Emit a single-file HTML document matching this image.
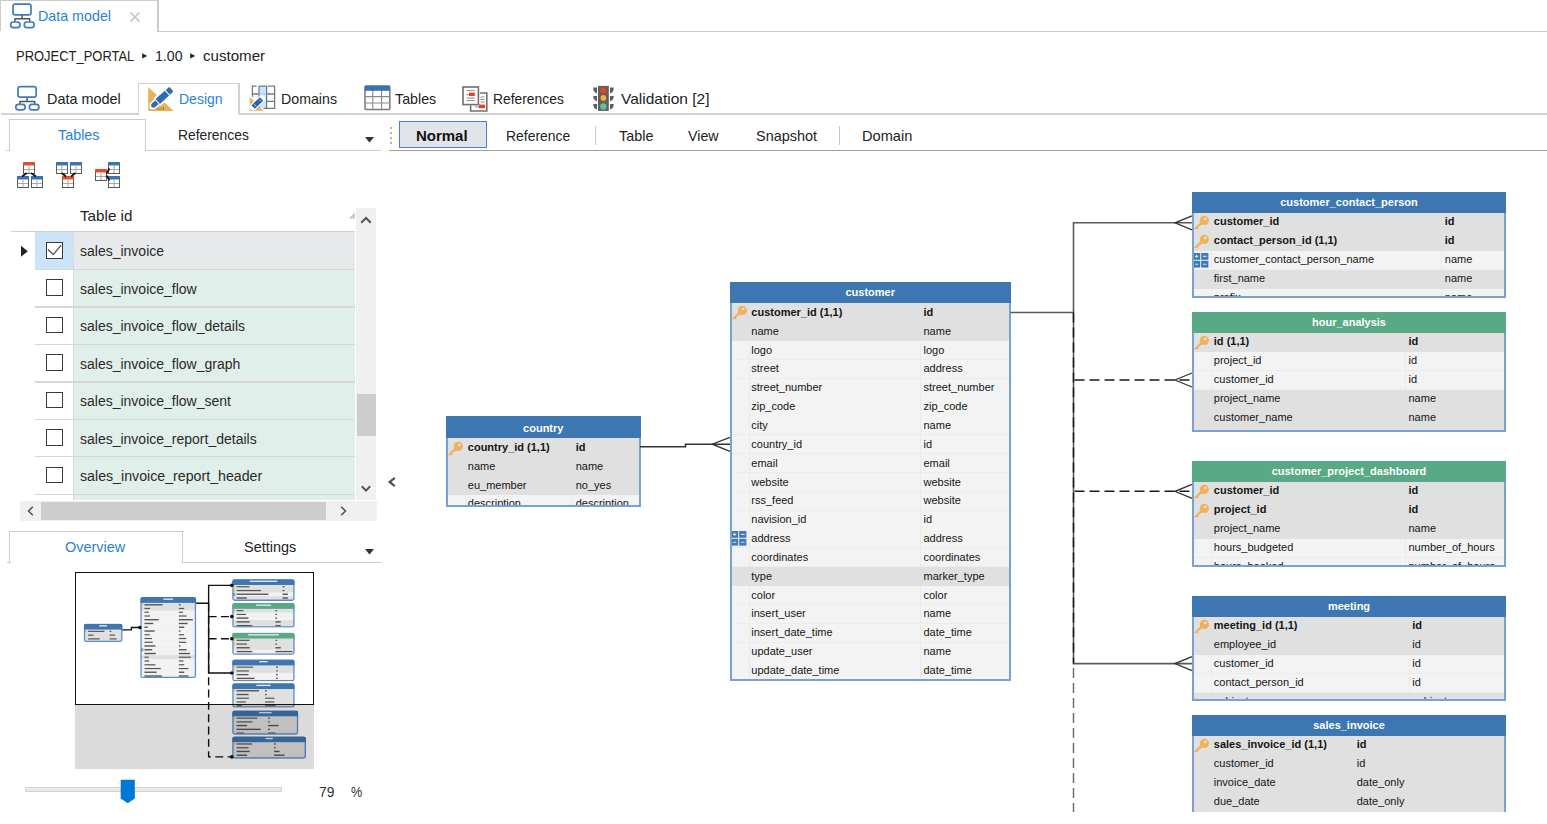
<!DOCTYPE html>
<html><head><meta charset="utf-8">
<style>
*{box-sizing:border-box}
html,body{margin:0;padding:0}
body{width:1547px;height:824px;position:relative;overflow:hidden;background:#fff;font-family:'Liberation Sans', sans-serif;color:#1e1e1e}
.a{position:absolute}
.t{position:absolute;white-space:nowrap;line-height:1;transform-origin:0 0}
</style></head><body>

<div class="a" style="left:0px;top:0px;width:158px;height:1px;background:#cccccc;"></div>
<div class="a" style="left:0px;top:0px;width:1px;height:31px;background:#cccccc;"></div>
<div class="a" style="left:157px;top:0px;width:2px;height:32px;background:#cccccc;"></div>
<div class="a" style="left:157px;top:31px;width:1390px;height:1px;background:#c8c8c8;"></div>
<svg class="a" style="left:0px;top:0px;" width="36" height="32" viewBox="0 0 36 32"><rect x="13" y="4.1" width="18" height="10.8" rx="2.2" fill="none" stroke="#3f7bc0" stroke-width="1.7"/>
<path d="M22.1 14.9V18.8M14.9 18.8H29.7M14.9 18.3V21.8M29.7 18.3V21.8" stroke="#555" stroke-width="1.5" fill="none"/>
<rect x="10.7" y="22" width="9.3" height="5.7" rx="2.6" fill="none" stroke="#3f7bc0" stroke-width="1.7"/>
<rect x="24.3" y="22" width="9.8" height="5.7" rx="2.6" fill="none" stroke="#3f7bc0" stroke-width="1.7"/></svg>
<div class="t" style="left:38.00px;top:8.10px;font-size:15px;color:#2a82d6;font-weight:400;transform:scaleX(0.9516);">Data model</div>
<svg class="a" style="left:129px;top:12px;" width="12" height="10" viewBox="0 0 12 10"><path d="M1.5 0.5L10.5 9.5M10.5 0.5L1.5 9.5" stroke="#c4c4c4" stroke-width="1.6"/></svg>
<div class="t" style="left:15.50px;top:47.80px;font-size:15px;color:#222;font-weight:400;transform:scaleX(0.8636);">PROJECT_PORTAL</div>
<svg class="a" style="left:141px;top:52px;" width="8" height="8" viewBox="0 0 8 8"><path d="M1.2 1.2L6.2 3.9L1.2 6.6Z" fill="#222"/></svg>
<div class="t" style="left:154.50px;top:47.80px;font-size:15px;color:#222;font-weight:400;transform:scaleX(0.9421);">1.00</div>
<svg class="a" style="left:188.5px;top:52px;" width="8" height="8" viewBox="0 0 8 8"><path d="M1.2 1.2L6.2 3.9L1.2 6.6Z" fill="#222"/></svg>
<div class="t" style="left:202.60px;top:47.80px;font-size:15px;color:#222;font-weight:400;transform:scaleX(1.0068);">customer</div>
<div class="a" style="left:1px;top:113.2px;width:137px;height:1.5px;background:#d2d2d2;"></div>
<div class="a" style="left:239px;top:113.2px;width:1308px;height:1.5px;background:#d2d2d2;"></div>
<div class="a" style="left:137.5px;top:82.5px;width:102px;height:1.5px;background:#d2d2d2;"></div>
<div class="a" style="left:137.5px;top:82.5px;width:1.5px;height:32px;background:#d2d2d2;"></div>
<div class="a" style="left:238.3px;top:82.5px;width:1.5px;height:32px;background:#d2d2d2;"></div>
<svg class="a" style="left:10px;top:82px;" width="32" height="32" viewBox="0 0 32 32"><rect x="8.0" y="4.7" width="18.2" height="10.4" rx="2.2" fill="none" stroke="#3f7bc0" stroke-width="1.7"/>
<path d="M17.1 15.9V19.6M9.9 19.6H24.7M9.9 19.1V22.4M24.7 19.1V22.4" stroke="#555" stroke-width="1.5" fill="none"/>
<rect x="5.8" y="22.4" width="9.3" height="5.5" rx="2.6" fill="none" stroke="#3f7bc0" stroke-width="1.7"/>
<rect x="19.4" y="22.4" width="9.5" height="5.5" rx="2.6" fill="none" stroke="#3f7bc0" stroke-width="1.7"/></svg>
<div class="t" style="left:46.50px;top:90.90px;font-size:15px;color:#222;font-weight:400;transform:scaleX(0.9608);">Data model</div>
<svg class="a" style="left:147px;top:86px;" width="28" height="26" viewBox="0 0 28 26"><path d="M1.2 1L1.2 24.9L26.6 24.9Z" fill="#e8b25c"/>
<path d="M10.2 23.6v-1.4M12.2 23.6v-1.2M14.2 23.6v-1.8M16.4 23.6v-2.6" stroke="#7d6a48" stroke-width="0.9"/>
<g transform="translate(3.9,21.6) rotate(-42)">
<path d="M0 0L2.5 -2.6H8.2V2.6H2.5Z M9.2 -3.9H21.6V3.9H9.2Z M22.6 -3.6H27.6V3.6H22.6Z" fill="#fff" stroke="#fff" stroke-width="2.6" stroke-linejoin="round"/>
<path d="M0.6 0L2.6 -2.4H8.2V2.4H2.6Z" fill="#2b6cb3"/>
<rect x="9.2" y="-3.3" width="12.4" height="6.6" fill="#2b6cb3"/>
<rect x="22.6" y="-3.1" width="5" height="6.2" rx="0.6" fill="#2b6cb3"/>
</g></svg>
<div class="t" style="left:179.40px;top:90.90px;font-size:15px;color:#2a82d6;font-weight:400;transform:scaleX(0.9337);">Design</div>
<svg class="a" style="left:248px;top:85px;" width="28" height="27" viewBox="0 0 28 27"><rect x="11.2" y="1.6" width="7.2" height="21.4" fill="#cde5f7"/>
<path d="M4.4 11.8V1.1H8.6M19.6 1.1H26.6V23.4H15.6M5 9H10.8M18.7 9H26.6M18.7 16.4H26.6" fill="none" stroke="#7a7a7a" stroke-width="1.3"/>
<path d="M11 1.1V23.4M18.6 1.1V23.4M11 1.1H18.6" fill="none" stroke="#5b7896" stroke-width="1.2"/>
<path d="M11 9H18.6" stroke="#a8c4dc" stroke-width="1"/>
<path d="M1.7 12.1V25.7H15.3Z" fill="#e8b25c"/>
<path d="M5.2 21.9L13.6 14" stroke="#fff" stroke-width="7" stroke-linecap="round"/>
<path d="M5.2 21.9L13.6 14" stroke="#2563b0" stroke-width="4.8" stroke-linecap="butt"/>
<path d="M6.2 19.2L8 21M11.3 14.6L13 16.4" stroke="#cfe0f2" stroke-width="0.9"/></svg>
<div class="t" style="left:281.00px;top:90.90px;font-size:15px;color:#222;font-weight:400;transform:scaleX(0.9461);">Domains</div>
<svg class="a" style="left:364px;top:85px;" width="27" height="26" viewBox="0 0 27 26"><rect x="1" y="1" width="24.8" height="23.6" rx="1" fill="#fff" stroke="#787878" stroke-width="1.5"/>
<rect x="0.8" y="0.8" width="25.2" height="5" fill="#3a73b4"/>
<path d="M8.8 5.8V24.5M17.6 5.8V24.5M1 11.6H25.8M1 18H25.8" stroke="#8a8a8a" stroke-width="1.1"/>
<path d="M8.8 1V5.8M17.6 1V5.8" stroke="#2f5f98" stroke-width="0.9"/></svg>
<div class="t" style="left:394.80px;top:90.90px;font-size:15px;color:#222;font-weight:400;transform:scaleX(0.9501);">Tables</div>
<svg class="a" style="left:461px;top:85px;" width="28" height="27" viewBox="0 0 28 27"><rect x="2" y="2" width="15.4" height="17.6" fill="#fff" stroke="#707070" stroke-width="1.6"/>
<path d="M5.5 5.6H13.8M5.5 13H13.8M5.5 15.6H13.8" stroke="#8c8c8c" stroke-width="1"/>
<path d="M5.5 9.6H7.6" stroke="#8c8c8c" stroke-width="1.3"/>
<rect x="8" y="7.6" width="5.8" height="3.4" fill="#d9442a"/>
<path d="M9.6 20.4V26H25.8V8H18.8" fill="none" stroke="#707070" stroke-width="1.6"/>
<path d="M19.6 12H23.6M19.6 14.5H23.6M19.6 17H23.6M14 21.9H18" stroke="#8c8c8c" stroke-width="1"/>
<rect x="18" y="19.6" width="6" height="3.6" fill="#d9442a"/></svg>
<div class="t" style="left:492.70px;top:90.90px;font-size:15px;color:#222;font-weight:400;transform:scaleX(0.9230);">References</div>
<svg class="a" style="left:592px;top:85px;" width="23" height="27" viewBox="0 0 23 27"><path d="M1.2 2.4Q1.2 7.5 5 8.4V2.4Z M1.2 11Q1.2 15.5 5 16.2V11Z M1.2 18.9Q1.2 23.5 5 24.4V18.9Z" fill="#606060"/>
<path d="M21.8 2.4Q21.8 7.5 18 8.4V2.4Z M21.8 11Q21.8 15.5 18 16.2V11Z M21.8 18.9Q21.8 23.5 18 24.4V18.9Z" fill="#606060"/>
<rect x="6" y="0.9" width="10.8" height="25" fill="#5f5f5f"/>
<circle cx="11.4" cy="5.4" r="3.2" fill="#e04427"/>
<circle cx="11.4" cy="12.9" r="2.8" fill="#f7b32d"/>
<circle cx="11.4" cy="21.5" r="3.2" fill="#5ec495"/></svg>
<div class="t" style="left:621.00px;top:90.90px;font-size:15px;color:#222;font-weight:400;transform:scaleX(1.0336);">Validation [2]</div>
<div class="a" style="left:9px;top:119px;width:137px;height:1.2px;background:#cccccc;"></div>
<div class="a" style="left:9px;top:119px;width:1.2px;height:31.5px;background:#cccccc;"></div>
<div class="a" style="left:144.8px;top:119px;width:1.2px;height:31.5px;background:#cccccc;"></div>
<div class="a" style="left:6px;top:149.6px;width:4px;height:1.2px;background:#cccccc;"></div>
<div class="a" style="left:145px;top:149.6px;width:236px;height:1.2px;background:#cccccc;"></div>
<div class="t" style="left:57.50px;top:127.00px;font-size:15px;color:#2a82d6;font-weight:400;transform:scaleX(0.9570);">Tables</div>
<div class="t" style="left:177.80px;top:127.00px;font-size:15px;color:#222;font-weight:400;transform:scaleX(0.9230);">References</div>
<svg class="a" style="left:365px;top:137px;" width="9" height="6" viewBox="0 0 9 6"><path d="M0 0H9L4.5 5.5Z" fill="#333"/></svg>
<div class="a" style="left:390px;top:126.8px;width:2.2px;height:2.2px;background:#b4b4a8;"></div>
<div class="a" style="left:390px;top:131.9px;width:2.2px;height:2.2px;background:#b4b4a8;"></div>
<div class="a" style="left:390px;top:136.9px;width:2.2px;height:2.2px;background:#b4b4a8;"></div>
<div class="a" style="left:390px;top:142px;width:2.2px;height:2.2px;background:#b4b4a8;"></div>
<div class="a" style="left:389px;top:149.5px;width:1158px;height:1.5px;background:#a2a28c;"></div>
<div class="a" style="left:398.8px;top:120.8px;width:88.2px;height:27.4px;background:#e1e5ea;border:1.6px solid #4a7fd0"></div>
<div class="t" style="left:415.90px;top:127.90px;font-size:15px;color:#111;font-weight:700;">Normal</div>
<div class="t" style="left:505.50px;top:127.90px;font-size:15px;color:#222;font-weight:400;transform:scaleX(0.9276);">Reference</div>
<div class="a" style="left:595px;top:126px;width:1px;height:18.6px;background:#c9c9c9;"></div>
<div class="t" style="left:619.20px;top:127.90px;font-size:15px;color:#222;font-weight:400;transform:scaleX(0.9592);">Table</div>
<div class="t" style="left:688.20px;top:127.90px;font-size:15px;color:#222;font-weight:400;transform:scaleX(0.9480);">View</div>
<div class="t" style="left:756.00px;top:127.90px;font-size:15px;color:#222;font-weight:400;transform:scaleX(0.9623);">Snapshot</div>
<div class="a" style="left:839px;top:126px;width:1px;height:18.6px;background:#c9c9c9;"></div>
<div class="t" style="left:862.40px;top:127.90px;font-size:15px;color:#222;font-weight:400;transform:scaleX(0.9731);">Domain</div>
<svg class="a" style="left:16px;top:161px;" width="28" height="28" viewBox="0 0 28 28"><g transform="translate(7,1)"><rect x="0.5" y="0.5" width="11" height="11" fill="#fff" stroke="#5a5a5a" stroke-width="1"/>
<rect x="0" y="0" width="12" height="3.5" fill="#d9512f"/>
<path d="M6 3.5V11M1 7.5H11" stroke="#a8a8a8" stroke-width="1"/></g><g transform="translate(1,15)"><rect x="0.5" y="0.5" width="11" height="11" fill="#fff" stroke="#5a5a5a" stroke-width="1"/>
<rect x="0" y="0" width="12" height="3.5" fill="#3a72b6"/>
<path d="M6 3.5V11M1 7.5H11" stroke="#a8a8a8" stroke-width="1"/></g><g transform="translate(15,15)"><rect x="0.5" y="0.5" width="11" height="11" fill="#fff" stroke="#5a5a5a" stroke-width="1"/>
<rect x="0" y="0" width="12" height="3.5" fill="#3a72b6"/>
<path d="M6 3.5V11M1 7.5H11" stroke="#a8a8a8" stroke-width="1"/></g><path d="M11 12L6 15.5M15 12L20 15.5" stroke="#111" stroke-width="1.6"/></svg>
<svg class="a" style="left:55px;top:161px;" width="28" height="28" viewBox="0 0 28 28"><g transform="translate(1,1)"><rect x="0.5" y="0.5" width="11" height="11" fill="#fff" stroke="#5a5a5a" stroke-width="1"/>
<rect x="0" y="0" width="12" height="3.5" fill="#3a72b6"/>
<path d="M6 3.5V11M1 7.5H11" stroke="#a8a8a8" stroke-width="1"/></g><g transform="translate(15,1)"><rect x="0.5" y="0.5" width="11" height="11" fill="#fff" stroke="#5a5a5a" stroke-width="1"/>
<rect x="0" y="0" width="12" height="3.5" fill="#3a72b6"/>
<path d="M6 3.5V11M1 7.5H11" stroke="#a8a8a8" stroke-width="1"/></g><g transform="translate(7,15)"><rect x="0.5" y="0.5" width="11" height="11" fill="#fff" stroke="#5a5a5a" stroke-width="1"/>
<rect x="0" y="0" width="12" height="3.5" fill="#d9512f"/>
<path d="M6 3.5V11M1 7.5H11" stroke="#a8a8a8" stroke-width="1"/></g><path d="M6.5 12L11 15.5M20.5 12L16 15.5" stroke="#111" stroke-width="1.6"/></svg>
<svg class="a" style="left:94px;top:161px;" width="28" height="28" viewBox="0 0 28 28"><g transform="translate(1,8)"><rect x="0.5" y="0.5" width="11" height="11" fill="#fff" stroke="#5a5a5a" stroke-width="1"/>
<rect x="0" y="0" width="12" height="3.5" fill="#d9512f"/>
<path d="M6 3.5V11M1 7.5H11" stroke="#a8a8a8" stroke-width="1"/></g><g transform="translate(14,1)"><rect x="0.5" y="0.5" width="11" height="11" fill="#fff" stroke="#5a5a5a" stroke-width="1"/>
<rect x="0" y="0" width="12" height="3.5" fill="#3a72b6"/>
<path d="M6 3.5V11M1 7.5H11" stroke="#a8a8a8" stroke-width="1"/></g><g transform="translate(14,15)"><rect x="0.5" y="0.5" width="11" height="11" fill="#fff" stroke="#5a5a5a" stroke-width="1"/>
<rect x="0" y="0" width="12" height="3.5" fill="#3a72b6"/>
<path d="M6 3.5V11M1 7.5H11" stroke="#a8a8a8" stroke-width="1"/></g><path d="M12.5 12.5L15.5 7.5M12.5 14.5L15.5 19.5" stroke="#111" stroke-width="1.6"/></svg>
<div class="t" style="left:79.60px;top:208.20px;font-size:15px;color:#222;font-weight:400;transform:scaleX(1.0134);">Table id</div>
<svg class="a" style="left:348px;top:212px;" width="8" height="7" viewBox="0 0 8 7"><path d="M7 0.5V6.5H0.5Z" fill="#c8c8c8"/></svg>
<div class="a" style="left:11px;top:231px;width:344px;height:1.2px;background:#d2d2d2;"></div>
<div class="a" style="left:0;top:232px;width:356px;height:267.5px;overflow:hidden">
<div class="a" style="left:35px;top:0.00px;width:39px;height:37.45px;background:#cce4f7"></div>
<div class="a" style="left:74px;top:0.00px;width:281px;height:37.45px;background:#e8e9eb"></div>
<div class="a" style="left:73px;top:0.00px;width:1.2px;height:37.45px;background:#d8d8d8"></div>
<div class="a" style="left:35px;top:37.45px;width:39px;height:37.45px;background:#fff"></div>
<div class="a" style="left:74px;top:37.45px;width:281px;height:37.45px;background:#e1efea"></div>
<div class="a" style="left:73px;top:37.45px;width:1.2px;height:37.45px;background:#d8d8d8"></div>
<div class="a" style="left:35px;top:74.90px;width:39px;height:37.45px;background:#fff"></div>
<div class="a" style="left:74px;top:74.90px;width:281px;height:37.45px;background:#e1efea"></div>
<div class="a" style="left:73px;top:74.90px;width:1.2px;height:37.45px;background:#d8d8d8"></div>
<div class="a" style="left:35px;top:112.35px;width:39px;height:37.45px;background:#fff"></div>
<div class="a" style="left:74px;top:112.35px;width:281px;height:37.45px;background:#e1efea"></div>
<div class="a" style="left:73px;top:112.35px;width:1.2px;height:37.45px;background:#d8d8d8"></div>
<div class="a" style="left:35px;top:149.80px;width:39px;height:37.45px;background:#fff"></div>
<div class="a" style="left:74px;top:149.80px;width:281px;height:37.45px;background:#e1efea"></div>
<div class="a" style="left:73px;top:149.80px;width:1.2px;height:37.45px;background:#d8d8d8"></div>
<div class="a" style="left:35px;top:187.25px;width:39px;height:37.45px;background:#fff"></div>
<div class="a" style="left:74px;top:187.25px;width:281px;height:37.45px;background:#e1efea"></div>
<div class="a" style="left:73px;top:187.25px;width:1.2px;height:37.45px;background:#d8d8d8"></div>
<div class="a" style="left:35px;top:224.70px;width:39px;height:37.45px;background:#fff"></div>
<div class="a" style="left:74px;top:224.70px;width:281px;height:37.45px;background:#e1efea"></div>
<div class="a" style="left:73px;top:224.70px;width:1.2px;height:37.45px;background:#d8d8d8"></div>
<div class="a" style="left:35px;top:262.15px;width:39px;height:37.45px;background:#fff"></div>
<div class="a" style="left:74px;top:262.15px;width:281px;height:37.45px;background:#e1efea"></div>
<div class="a" style="left:73px;top:262.15px;width:1.2px;height:37.45px;background:#d8d8d8"></div>
<div class="a" style="left:35px;top:36.85px;width:320px;height:1.4px;background:#d6d6d6"></div>
<div class="a" style="left:46px;top:10.00px;width:16.5px;height:16.5px;border:1.6px solid #3a3a3a;background:#fff"></div>
<svg class="a" style="left:46px;top:10.00px" width="17" height="17"><path d="M2 7.6L7.2 12.6L15 3.4" stroke="#555" stroke-width="1.4" fill="none"/></svg>
<div class="t" style="left:80.00px;top:12.35px;font-size:14px;color:#2a2a2a;font-weight:400;">sales_invoice</div>
<div class="a" style="left:35px;top:74.30px;width:320px;height:1.4px;background:#d6d6d6"></div>
<div class="a" style="left:46px;top:47.45px;width:16.5px;height:16.5px;border:1.6px solid #3a3a3a;background:#fff"></div>
<div class="t" style="left:80.00px;top:49.80px;font-size:14px;color:#2a2a2a;font-weight:400;">sales_invoice_flow</div>
<div class="a" style="left:35px;top:111.75px;width:320px;height:1.4px;background:#d6d6d6"></div>
<div class="a" style="left:46px;top:84.90px;width:16.5px;height:16.5px;border:1.6px solid #3a3a3a;background:#fff"></div>
<div class="t" style="left:80.00px;top:87.25px;font-size:14px;color:#2a2a2a;font-weight:400;">sales_invoice_flow_details</div>
<div class="a" style="left:35px;top:149.20px;width:320px;height:1.4px;background:#d6d6d6"></div>
<div class="a" style="left:46px;top:122.35px;width:16.5px;height:16.5px;border:1.6px solid #3a3a3a;background:#fff"></div>
<div class="t" style="left:80.00px;top:124.70px;font-size:14px;color:#2a2a2a;font-weight:400;">sales_invoice_flow_graph</div>
<div class="a" style="left:35px;top:186.65px;width:320px;height:1.4px;background:#d6d6d6"></div>
<div class="a" style="left:46px;top:159.80px;width:16.5px;height:16.5px;border:1.6px solid #3a3a3a;background:#fff"></div>
<div class="t" style="left:80.00px;top:162.15px;font-size:14px;color:#2a2a2a;font-weight:400;">sales_invoice_flow_sent</div>
<div class="a" style="left:35px;top:224.10px;width:320px;height:1.4px;background:#d6d6d6"></div>
<div class="a" style="left:46px;top:197.25px;width:16.5px;height:16.5px;border:1.6px solid #3a3a3a;background:#fff"></div>
<div class="t" style="left:80.00px;top:199.60px;font-size:14px;color:#2a2a2a;font-weight:400;">sales_invoice_report_details</div>
<div class="a" style="left:35px;top:261.55px;width:320px;height:1.4px;background:#d6d6d6"></div>
<div class="a" style="left:46px;top:234.70px;width:16.5px;height:16.5px;border:1.6px solid #3a3a3a;background:#fff"></div>
<div class="t" style="left:80.00px;top:237.05px;font-size:14px;color:#2a2a2a;font-weight:400;transform:scaleX(1.0134);">sales_invoice_report_header</div>
<div class="a" style="left:35px;top:299.00px;width:320px;height:1.4px;background:#d6d6d6"></div>
<div class="a" style="left:46px;top:272.15px;width:16.5px;height:16.5px;border:1.6px solid #3a3a3a;background:#fff"></div>
<div class="t" style="left:80.00px;top:274.50px;font-size:14px;color:#2a2a2a;font-weight:400;">sales_invoice_x</div>
</div>
<svg class="a" style="left:20px;top:245px;" width="9" height="13" viewBox="0 0 9 13"><path d="M1 0.8L7.8 6.3L1 11.8Z" fill="#222"/></svg>
<div class="a" style="left:356px;top:208px;width:20px;height:292px;background:#f0f0f0;"></div>
<svg class="a" style="left:359px;top:214px;" width="14" height="11" viewBox="0 0 14 11"><path d="M2.2 8.8L7 4L11.8 8.8" stroke="#555" stroke-width="2" fill="none"/></svg>
<svg class="a" style="left:359px;top:484px;" width="14" height="11" viewBox="0 0 14 11"><path d="M2.8 2.3L7 6.6L11.2 2.3" stroke="#555" stroke-width="2" fill="none"/></svg>
<div class="a" style="left:356.5px;top:393.7px;width:19px;height:42px;background:#cdcdcd;"></div>
<div class="a" style="left:19.5px;top:500.5px;width:357px;height:20.2px;background:#f0f0f0;"></div>
<div class="a" style="left:41px;top:501.5px;width:285px;height:18px;background:#cdcdcd;"></div>
<svg class="a" style="left:24px;top:505px;" width="12" height="12" viewBox="0 0 12 12"><path d="M8.8 1.8L4.5 6L8.8 10.2" stroke="#555" stroke-width="1.6" fill="none"/></svg>
<svg class="a" style="left:338px;top:505px;" width="12" height="12" viewBox="0 0 12 12"><path d="M3.2 1.8L7.5 6L3.2 10.2" stroke="#555" stroke-width="1.6" fill="none"/></svg>
<svg class="a" style="left:385px;top:476px;" width="12" height="12" viewBox="0 0 12 12"><path d="M9.8 1.8L4.6 6L9.8 10.2" stroke="#555" stroke-width="2.3" fill="none"/></svg>
<div class="a" style="left:9px;top:531px;width:174.5px;height:1.2px;background:#cccccc;"></div>
<div class="a" style="left:9px;top:531px;width:1.2px;height:32px;background:#cccccc;"></div>
<div class="a" style="left:182.2px;top:531px;width:1.2px;height:32px;background:#cccccc;"></div>
<div class="a" style="left:6.5px;top:562.2px;width:4px;height:1.2px;background:#cccccc;"></div>
<div class="a" style="left:182.5px;top:562.2px;width:198px;height:1.2px;background:#cccccc;"></div>
<div class="t" style="left:65.20px;top:539.30px;font-size:15px;color:#2a82d6;font-weight:400;transform:scaleX(0.9624);">Overview</div>
<div class="t" style="left:243.80px;top:539.30px;font-size:15px;color:#222;font-weight:400;transform:scaleX(0.9632);">Settings</div>
<svg class="a" style="left:364.5px;top:549px;" width="9" height="6" viewBox="0 0 9 6"><path d="M0 0H9L4.5 5.5Z" fill="#333"/></svg>
<div class="a" style="left:24.8px;top:787px;width:257.5px;height:5px;background:#e7eae7;border:1px solid #d4d4d4"></div>
<svg class="a" style="left:120px;top:779px;" width="16" height="25" viewBox="0 0 16 25"><path d="M0.7 0.8H14.8V19.5L7.75 24.3L0.7 19.5Z" fill="#0078d7"/></svg>
<div class="t" style="left:318.50px;top:785.45px;font-size:14px;color:#333;font-weight:400;transform:scaleX(0.9956);">79</div>
<div class="t" style="left:350.80px;top:785.45px;font-size:14px;color:#333;font-weight:400;transform:scaleX(0.8999);">%</div>
<div class="a" style="left:389px;top:151px;width:1158px;height:661px;overflow:hidden">
<div class="a" style="left:-389px;top:-151px;width:1600px;height:1100px">
<div class="a" style="left:446px;top:416px;width:194.5px;height:91.00px;overflow:hidden;background:#e0e0e0;">
<div class="a" style="left:0;top:22.40px;width:194.5px;height:19.15px;background:#e0e0e0"></div>
<div class="t" style="left:21.80px;top:25.89px;font-size:11px;color:#151515;font-weight:700;">country_id (1,1)</div>
<div class="t" style="left:129.70px;top:25.89px;font-size:11px;color:#151515;font-weight:700;">id</div>
<svg class="a" style="left:0px;top:22.60px" width="17" height="18" viewBox="0 0 17 18">
<circle cx="12.3" cy="7.4" r="4.6" fill="#ecb25e"/>
<path d="M9.2 8.4L2.4 15.2Q2.2 16.4 3.4 16.6L4.6 15.6L5.6 16.4L6.8 15.2L6 14.2L11.6 10.4Z" fill="#ecb25e"/>
<circle cx="13.3" cy="5.9" r="1.15" fill="#fff" opacity="0.75"/></svg>
<div class="a" style="left:0;top:41.25px;width:194.5px;height:19.15px;background:#e0e0e0"></div>
<div class="t" style="left:21.80px;top:44.74px;font-size:11px;color:#151515;font-weight:400;">name</div>
<div class="t" style="left:129.70px;top:44.74px;font-size:11px;color:#151515;font-weight:400;">name</div>
<div class="a" style="left:0;top:60.10px;width:194.5px;height:19.15px;background:#e0e0e0"></div>
<div class="t" style="left:21.80px;top:63.59px;font-size:11px;color:#151515;font-weight:400;">eu_member</div>
<div class="t" style="left:129.70px;top:63.59px;font-size:11px;color:#151515;font-weight:400;">no_yes</div>
<div class="a" style="left:0;top:78.95px;width:194.5px;height:19.15px;background:#f3f3f3"></div>
<div class="a" style="left:0;top:97.00px;width:194.5px;height:0.8px;background:#ececec"></div>
<div class="a" style="left:19px;top:78.95px;width:1px;height:18.85px;background:#eaeaea"></div>
<div class="a" style="left:126.2px;top:78.95px;width:1px;height:18.85px;background:#eaeaea"></div>
<div class="t" style="left:21.80px;top:82.44px;font-size:11px;color:#151515;font-weight:400;">description</div>
<div class="t" style="left:129.70px;top:82.44px;font-size:11px;color:#151515;font-weight:400;">description</div>
<div class="a" style="left:0;top:0;width:194.5px;height:91.00px;border:2px solid #7aa1cf;"></div>
<div class="a" style="left:0;top:0;width:194.5px;height:22.4px;background:#3d76b1"></div>
<div class="t" style="left:77.08px;top:6.89px;font-size:11px;color:#fff;font-weight:700;">country</div>
</div>
<div class="a" style="left:729.5px;top:282px;width:281.5px;height:399.00px;overflow:hidden;background:#e0e0e0;">
<div class="a" style="left:0;top:21.20px;width:281.5px;height:19.15px;background:#e0e0e0"></div>
<div class="t" style="left:21.80px;top:24.89px;font-size:11px;color:#151515;font-weight:700;">customer_id (1,1)</div>
<div class="t" style="left:194.00px;top:24.89px;font-size:11px;color:#151515;font-weight:700;">id</div>
<svg class="a" style="left:0px;top:21.40px" width="17" height="18" viewBox="0 0 17 18">
<circle cx="12.3" cy="7.4" r="4.6" fill="#ecb25e"/>
<path d="M9.2 8.4L2.4 15.2Q2.2 16.4 3.4 16.6L4.6 15.6L5.6 16.4L6.8 15.2L6 14.2L11.6 10.4Z" fill="#ecb25e"/>
<circle cx="13.3" cy="5.9" r="1.15" fill="#fff" opacity="0.75"/></svg>
<div class="a" style="left:0;top:40.05px;width:281.5px;height:19.15px;background:#e0e0e0"></div>
<div class="t" style="left:21.80px;top:43.74px;font-size:11px;color:#151515;font-weight:400;">name</div>
<div class="t" style="left:194.00px;top:43.74px;font-size:11px;color:#151515;font-weight:400;">name</div>
<div class="a" style="left:0;top:58.90px;width:281.5px;height:19.15px;background:#f3f3f3"></div>
<div class="a" style="left:0;top:76.95px;width:281.5px;height:0.8px;background:#ececec"></div>
<div class="a" style="left:19px;top:58.90px;width:1px;height:18.85px;background:#eaeaea"></div>
<div class="a" style="left:190.5px;top:58.90px;width:1px;height:18.85px;background:#eaeaea"></div>
<div class="t" style="left:21.80px;top:62.59px;font-size:11px;color:#151515;font-weight:400;">logo</div>
<div class="t" style="left:194.00px;top:62.59px;font-size:11px;color:#151515;font-weight:400;">logo</div>
<div class="a" style="left:0;top:77.75px;width:281.5px;height:19.15px;background:#f3f3f3"></div>
<div class="a" style="left:0;top:95.80px;width:281.5px;height:0.8px;background:#ececec"></div>
<div class="a" style="left:19px;top:77.75px;width:1px;height:18.85px;background:#eaeaea"></div>
<div class="a" style="left:190.5px;top:77.75px;width:1px;height:18.85px;background:#eaeaea"></div>
<div class="t" style="left:21.80px;top:81.44px;font-size:11px;color:#151515;font-weight:400;">street</div>
<div class="t" style="left:194.00px;top:81.44px;font-size:11px;color:#151515;font-weight:400;">address</div>
<div class="a" style="left:0;top:96.60px;width:281.5px;height:19.15px;background:#f3f3f3"></div>
<div class="a" style="left:0;top:114.65px;width:281.5px;height:0.8px;background:#ececec"></div>
<div class="a" style="left:19px;top:96.60px;width:1px;height:18.85px;background:#eaeaea"></div>
<div class="a" style="left:190.5px;top:96.60px;width:1px;height:18.85px;background:#eaeaea"></div>
<div class="t" style="left:21.80px;top:100.29px;font-size:11px;color:#151515;font-weight:400;">street_number</div>
<div class="t" style="left:194.00px;top:100.29px;font-size:11px;color:#151515;font-weight:400;">street_number</div>
<div class="a" style="left:0;top:115.45px;width:281.5px;height:19.15px;background:#f3f3f3"></div>
<div class="a" style="left:0;top:133.50px;width:281.5px;height:0.8px;background:#ececec"></div>
<div class="a" style="left:19px;top:115.45px;width:1px;height:18.85px;background:#eaeaea"></div>
<div class="a" style="left:190.5px;top:115.45px;width:1px;height:18.85px;background:#eaeaea"></div>
<div class="t" style="left:21.80px;top:119.14px;font-size:11px;color:#151515;font-weight:400;">zip_code</div>
<div class="t" style="left:194.00px;top:119.14px;font-size:11px;color:#151515;font-weight:400;">zip_code</div>
<div class="a" style="left:0;top:134.30px;width:281.5px;height:19.15px;background:#f3f3f3"></div>
<div class="a" style="left:0;top:152.35px;width:281.5px;height:0.8px;background:#ececec"></div>
<div class="a" style="left:19px;top:134.30px;width:1px;height:18.85px;background:#eaeaea"></div>
<div class="a" style="left:190.5px;top:134.30px;width:1px;height:18.85px;background:#eaeaea"></div>
<div class="t" style="left:21.80px;top:137.99px;font-size:11px;color:#151515;font-weight:400;">city</div>
<div class="t" style="left:194.00px;top:137.99px;font-size:11px;color:#151515;font-weight:400;">name</div>
<div class="a" style="left:0;top:153.15px;width:281.5px;height:19.15px;background:#f3f3f3"></div>
<div class="a" style="left:0;top:171.20px;width:281.5px;height:0.8px;background:#ececec"></div>
<div class="a" style="left:19px;top:153.15px;width:1px;height:18.85px;background:#eaeaea"></div>
<div class="a" style="left:190.5px;top:153.15px;width:1px;height:18.85px;background:#eaeaea"></div>
<div class="t" style="left:21.80px;top:156.84px;font-size:11px;color:#151515;font-weight:400;">country_id</div>
<div class="t" style="left:194.00px;top:156.84px;font-size:11px;color:#151515;font-weight:400;">id</div>
<div class="a" style="left:0;top:172.00px;width:281.5px;height:19.15px;background:#f3f3f3"></div>
<div class="a" style="left:0;top:190.05px;width:281.5px;height:0.8px;background:#ececec"></div>
<div class="a" style="left:19px;top:172.00px;width:1px;height:18.85px;background:#eaeaea"></div>
<div class="a" style="left:190.5px;top:172.00px;width:1px;height:18.85px;background:#eaeaea"></div>
<div class="t" style="left:21.80px;top:175.69px;font-size:11px;color:#151515;font-weight:400;">email</div>
<div class="t" style="left:194.00px;top:175.69px;font-size:11px;color:#151515;font-weight:400;">email</div>
<div class="a" style="left:0;top:190.85px;width:281.5px;height:19.15px;background:#f3f3f3"></div>
<div class="a" style="left:0;top:208.90px;width:281.5px;height:0.8px;background:#ececec"></div>
<div class="a" style="left:19px;top:190.85px;width:1px;height:18.85px;background:#eaeaea"></div>
<div class="a" style="left:190.5px;top:190.85px;width:1px;height:18.85px;background:#eaeaea"></div>
<div class="t" style="left:21.82px;top:194.54px;font-size:11px;color:#151515;font-weight:400;">website</div>
<div class="t" style="left:194.02px;top:194.54px;font-size:11px;color:#151515;font-weight:400;">website</div>
<div class="a" style="left:0;top:209.70px;width:281.5px;height:19.15px;background:#f3f3f3"></div>
<div class="a" style="left:0;top:227.75px;width:281.5px;height:0.8px;background:#ececec"></div>
<div class="a" style="left:19px;top:209.70px;width:1px;height:18.85px;background:#eaeaea"></div>
<div class="a" style="left:190.5px;top:209.70px;width:1px;height:18.85px;background:#eaeaea"></div>
<div class="t" style="left:21.80px;top:213.39px;font-size:11px;color:#151515;font-weight:400;">rss_feed</div>
<div class="t" style="left:194.02px;top:213.39px;font-size:11px;color:#151515;font-weight:400;">website</div>
<div class="a" style="left:0;top:228.55px;width:281.5px;height:19.15px;background:#f3f3f3"></div>
<div class="a" style="left:0;top:246.60px;width:281.5px;height:0.8px;background:#ececec"></div>
<div class="a" style="left:19px;top:228.55px;width:1px;height:18.85px;background:#eaeaea"></div>
<div class="a" style="left:190.5px;top:228.55px;width:1px;height:18.85px;background:#eaeaea"></div>
<div class="t" style="left:21.80px;top:232.24px;font-size:11px;color:#151515;font-weight:400;">navision_id</div>
<div class="t" style="left:194.00px;top:232.24px;font-size:11px;color:#151515;font-weight:400;">id</div>
<div class="a" style="left:0;top:247.40px;width:281.5px;height:19.15px;background:#f3f3f3"></div>
<div class="a" style="left:0;top:265.45px;width:281.5px;height:0.8px;background:#ececec"></div>
<div class="a" style="left:19px;top:247.40px;width:1px;height:18.85px;background:#eaeaea"></div>
<div class="a" style="left:190.5px;top:247.40px;width:1px;height:18.85px;background:#eaeaea"></div>
<div class="t" style="left:21.80px;top:251.09px;font-size:11px;color:#151515;font-weight:400;">address</div>
<div class="t" style="left:194.00px;top:251.09px;font-size:11px;color:#151515;font-weight:400;">address</div>
<svg class="a" style="left:1.2px;top:249.20px" width="16" height="15" viewBox="0 0 16 15">
<rect x="0" y="0" width="7.2" height="6.8" fill="#3f78bf"/><rect x="8.2" y="0" width="7.2" height="6.8" fill="#3f78bf"/>
<rect x="0" y="7.8" width="7.2" height="6.8" fill="#3f78bf"/><rect x="8.2" y="7.8" width="7.2" height="6.8" fill="#3f78bf"/>
<path d="M2 3.4H5.2M3.6 1.8V5M10 3.4H13.6M2 11.2H5.2M10 11.2H13.6" stroke="#c8dcf2" stroke-width="1.1"/></svg>
<div class="a" style="left:0;top:266.25px;width:281.5px;height:19.15px;background:#f3f3f3"></div>
<div class="a" style="left:0;top:284.30px;width:281.5px;height:0.8px;background:#ececec"></div>
<div class="a" style="left:19px;top:266.25px;width:1px;height:18.85px;background:#eaeaea"></div>
<div class="a" style="left:190.5px;top:266.25px;width:1px;height:18.85px;background:#eaeaea"></div>
<div class="t" style="left:21.80px;top:269.94px;font-size:11px;color:#151515;font-weight:400;">coordinates</div>
<div class="t" style="left:194.00px;top:269.94px;font-size:11px;color:#151515;font-weight:400;">coordinates</div>
<div class="a" style="left:0;top:285.10px;width:281.5px;height:19.15px;background:#e0e0e0"></div>
<div class="t" style="left:21.80px;top:288.79px;font-size:11px;color:#151515;font-weight:400;">type</div>
<div class="t" style="left:194.00px;top:288.79px;font-size:11px;color:#151515;font-weight:400;">marker_type</div>
<div class="a" style="left:0;top:303.95px;width:281.5px;height:19.15px;background:#f3f3f3"></div>
<div class="a" style="left:0;top:322.00px;width:281.5px;height:0.8px;background:#ececec"></div>
<div class="a" style="left:19px;top:303.95px;width:1px;height:18.85px;background:#eaeaea"></div>
<div class="a" style="left:190.5px;top:303.95px;width:1px;height:18.85px;background:#eaeaea"></div>
<div class="t" style="left:21.80px;top:307.64px;font-size:11px;color:#151515;font-weight:400;">color</div>
<div class="t" style="left:194.00px;top:307.64px;font-size:11px;color:#151515;font-weight:400;">color</div>
<div class="a" style="left:0;top:322.80px;width:281.5px;height:19.15px;background:#f3f3f3"></div>
<div class="a" style="left:0;top:340.85px;width:281.5px;height:0.8px;background:#ececec"></div>
<div class="a" style="left:19px;top:322.80px;width:1px;height:18.85px;background:#eaeaea"></div>
<div class="a" style="left:190.5px;top:322.80px;width:1px;height:18.85px;background:#eaeaea"></div>
<div class="t" style="left:21.80px;top:326.49px;font-size:11px;color:#151515;font-weight:400;">insert_user</div>
<div class="t" style="left:194.00px;top:326.49px;font-size:11px;color:#151515;font-weight:400;">name</div>
<div class="a" style="left:0;top:341.65px;width:281.5px;height:19.15px;background:#f3f3f3"></div>
<div class="a" style="left:0;top:359.70px;width:281.5px;height:0.8px;background:#ececec"></div>
<div class="a" style="left:19px;top:341.65px;width:1px;height:18.85px;background:#eaeaea"></div>
<div class="a" style="left:190.5px;top:341.65px;width:1px;height:18.85px;background:#eaeaea"></div>
<div class="t" style="left:21.80px;top:345.34px;font-size:11px;color:#151515;font-weight:400;">insert_date_time</div>
<div class="t" style="left:194.00px;top:345.34px;font-size:11px;color:#151515;font-weight:400;">date_time</div>
<div class="a" style="left:0;top:360.50px;width:281.5px;height:19.15px;background:#f3f3f3"></div>
<div class="a" style="left:0;top:378.55px;width:281.5px;height:0.8px;background:#ececec"></div>
<div class="a" style="left:19px;top:360.50px;width:1px;height:18.85px;background:#eaeaea"></div>
<div class="a" style="left:190.5px;top:360.50px;width:1px;height:18.85px;background:#eaeaea"></div>
<div class="t" style="left:21.80px;top:364.19px;font-size:11px;color:#151515;font-weight:400;">update_user</div>
<div class="t" style="left:194.00px;top:364.19px;font-size:11px;color:#151515;font-weight:400;">name</div>
<div class="a" style="left:0;top:379.35px;width:281.5px;height:19.15px;background:#f3f3f3"></div>
<div class="a" style="left:0;top:397.40px;width:281.5px;height:0.8px;background:#ececec"></div>
<div class="a" style="left:19px;top:379.35px;width:1px;height:18.85px;background:#eaeaea"></div>
<div class="a" style="left:190.5px;top:379.35px;width:1px;height:18.85px;background:#eaeaea"></div>
<div class="t" style="left:21.80px;top:383.04px;font-size:11px;color:#151515;font-weight:400;">update_date_time</div>
<div class="t" style="left:194.00px;top:383.04px;font-size:11px;color:#151515;font-weight:400;">date_time</div>
<div class="a" style="left:0;top:0;width:281.5px;height:399.00px;border:2px solid #7aa1cf;"></div>
<div class="a" style="left:0;top:0;width:281.5px;height:21.2px;background:#3d76b1"></div>
<div class="t" style="left:115.99px;top:5.49px;font-size:11px;color:#fff;font-weight:700;">customer</div>
</div>
<div class="a" style="left:1192px;top:192px;width:314px;height:106.00px;overflow:hidden;background:#e0e0e0;">
<div class="a" style="left:0;top:21.20px;width:314px;height:19.15px;background:#e0e0e0"></div>
<div class="t" style="left:21.80px;top:24.49px;font-size:11px;color:#151515;font-weight:700;">customer_id</div>
<div class="t" style="left:252.80px;top:24.49px;font-size:11px;color:#151515;font-weight:700;">id</div>
<svg class="a" style="left:0px;top:21.40px" width="17" height="18" viewBox="0 0 17 18">
<circle cx="12.3" cy="7.4" r="4.6" fill="#ecb25e"/>
<path d="M9.2 8.4L2.4 15.2Q2.2 16.4 3.4 16.6L4.6 15.6L5.6 16.4L6.8 15.2L6 14.2L11.6 10.4Z" fill="#ecb25e"/>
<circle cx="13.3" cy="5.9" r="1.15" fill="#fff" opacity="0.75"/></svg>
<div class="a" style="left:0;top:40.05px;width:314px;height:19.15px;background:#e0e0e0"></div>
<div class="t" style="left:21.80px;top:43.34px;font-size:11px;color:#151515;font-weight:700;">contact_person_id (1,1)</div>
<div class="t" style="left:252.80px;top:43.34px;font-size:11px;color:#151515;font-weight:700;">id</div>
<svg class="a" style="left:0px;top:40.25px" width="17" height="18" viewBox="0 0 17 18">
<circle cx="12.3" cy="7.4" r="4.6" fill="#ecb25e"/>
<path d="M9.2 8.4L2.4 15.2Q2.2 16.4 3.4 16.6L4.6 15.6L5.6 16.4L6.8 15.2L6 14.2L11.6 10.4Z" fill="#ecb25e"/>
<circle cx="13.3" cy="5.9" r="1.15" fill="#fff" opacity="0.75"/></svg>
<div class="a" style="left:0;top:58.90px;width:314px;height:19.15px;background:#f3f3f3"></div>
<div class="a" style="left:0;top:76.95px;width:314px;height:0.8px;background:#ececec"></div>
<div class="a" style="left:19px;top:58.90px;width:1px;height:18.85px;background:#eaeaea"></div>
<div class="a" style="left:249.3px;top:58.90px;width:1px;height:18.85px;background:#eaeaea"></div>
<div class="t" style="left:21.80px;top:62.19px;font-size:11px;color:#151515;font-weight:400;">customer_contact_person_name</div>
<div class="t" style="left:252.80px;top:62.19px;font-size:11px;color:#151515;font-weight:400;">name</div>
<svg class="a" style="left:1.2px;top:60.70px" width="16" height="15" viewBox="0 0 16 15">
<rect x="0" y="0" width="7.2" height="6.8" fill="#3f78bf"/><rect x="8.2" y="0" width="7.2" height="6.8" fill="#3f78bf"/>
<rect x="0" y="7.8" width="7.2" height="6.8" fill="#3f78bf"/><rect x="8.2" y="7.8" width="7.2" height="6.8" fill="#3f78bf"/>
<path d="M2 3.4H5.2M3.6 1.8V5M10 3.4H13.6M2 11.2H5.2M10 11.2H13.6" stroke="#c8dcf2" stroke-width="1.1"/></svg>
<div class="a" style="left:0;top:77.75px;width:314px;height:19.15px;background:#e0e0e0"></div>
<div class="t" style="left:21.80px;top:81.04px;font-size:11px;color:#151515;font-weight:400;">first_name</div>
<div class="t" style="left:252.80px;top:81.04px;font-size:11px;color:#151515;font-weight:400;">name</div>
<div class="a" style="left:0;top:96.60px;width:314px;height:19.15px;background:#f3f3f3"></div>
<div class="a" style="left:0;top:114.65px;width:314px;height:0.8px;background:#ececec"></div>
<div class="a" style="left:19px;top:96.60px;width:1px;height:18.85px;background:#eaeaea"></div>
<div class="a" style="left:249.3px;top:96.60px;width:1px;height:18.85px;background:#eaeaea"></div>
<div class="t" style="left:21.80px;top:99.89px;font-size:11px;color:#151515;font-weight:400;">prefix</div>
<div class="t" style="left:252.80px;top:99.89px;font-size:11px;color:#151515;font-weight:400;">name</div>
<div class="a" style="left:0;top:0;width:314px;height:106.00px;border:2px solid #7aa1cf;"></div>
<div class="a" style="left:0;top:0;width:314px;height:21.2px;background:#3d76b1"></div>
<div class="t" style="left:88.23px;top:5.39px;font-size:11px;color:#fff;font-weight:700;">customer_contact_person</div>
</div>
<div class="a" style="left:1192px;top:312px;width:314px;height:120.00px;overflow:hidden;background:#e0e0e0;">
<div class="a" style="left:0;top:21.20px;width:314px;height:19.15px;background:#e0e0e0"></div>
<div class="t" style="left:21.80px;top:24.49px;font-size:11px;color:#151515;font-weight:700;">id (1,1)</div>
<div class="t" style="left:216.50px;top:24.49px;font-size:11px;color:#151515;font-weight:700;">id</div>
<svg class="a" style="left:0px;top:21.40px" width="17" height="18" viewBox="0 0 17 18">
<circle cx="12.3" cy="7.4" r="4.6" fill="#ecb25e"/>
<path d="M9.2 8.4L2.4 15.2Q2.2 16.4 3.4 16.6L4.6 15.6L5.6 16.4L6.8 15.2L6 14.2L11.6 10.4Z" fill="#ecb25e"/>
<circle cx="13.3" cy="5.9" r="1.15" fill="#fff" opacity="0.75"/></svg>
<div class="a" style="left:0;top:40.05px;width:314px;height:19.15px;background:#f3f3f3"></div>
<div class="a" style="left:0;top:58.10px;width:314px;height:0.8px;background:#ececec"></div>
<div class="a" style="left:19px;top:40.05px;width:1px;height:18.85px;background:#eaeaea"></div>
<div class="a" style="left:213.0px;top:40.05px;width:1px;height:18.85px;background:#eaeaea"></div>
<div class="t" style="left:21.80px;top:43.34px;font-size:11px;color:#151515;font-weight:400;">project_id</div>
<div class="t" style="left:216.50px;top:43.34px;font-size:11px;color:#151515;font-weight:400;">id</div>
<div class="a" style="left:0;top:58.90px;width:314px;height:19.15px;background:#f3f3f3"></div>
<div class="a" style="left:0;top:76.95px;width:314px;height:0.8px;background:#ececec"></div>
<div class="a" style="left:19px;top:58.90px;width:1px;height:18.85px;background:#eaeaea"></div>
<div class="a" style="left:213.0px;top:58.90px;width:1px;height:18.85px;background:#eaeaea"></div>
<div class="t" style="left:21.80px;top:62.19px;font-size:11px;color:#151515;font-weight:400;">customer_id</div>
<div class="t" style="left:216.50px;top:62.19px;font-size:11px;color:#151515;font-weight:400;">id</div>
<div class="a" style="left:0;top:77.75px;width:314px;height:19.15px;background:#e0e0e0"></div>
<div class="t" style="left:21.80px;top:81.04px;font-size:11px;color:#151515;font-weight:400;">project_name</div>
<div class="t" style="left:216.50px;top:81.04px;font-size:11px;color:#151515;font-weight:400;">name</div>
<div class="a" style="left:0;top:96.60px;width:314px;height:19.15px;background:#e0e0e0"></div>
<div class="t" style="left:21.80px;top:99.89px;font-size:11px;color:#151515;font-weight:400;">customer_name</div>
<div class="t" style="left:216.50px;top:99.89px;font-size:11px;color:#151515;font-weight:400;">name</div>
<div class="a" style="left:0;top:0;width:314px;height:120.00px;border:2px solid #7aa1cf;"></div>
<div class="a" style="left:0;top:0;width:314px;height:21.2px;background:#58aa86"></div>
<div class="t" style="left:120.01px;top:5.39px;font-size:11px;color:#fff;font-weight:700;">hour_analysis</div>
</div>
<div class="a" style="left:1192px;top:461px;width:314px;height:105.50px;overflow:hidden;background:#e0e0e0;">
<div class="a" style="left:0;top:21.20px;width:314px;height:19.15px;background:#e0e0e0"></div>
<div class="t" style="left:21.80px;top:24.49px;font-size:11px;color:#151515;font-weight:700;">customer_id</div>
<div class="t" style="left:216.50px;top:24.49px;font-size:11px;color:#151515;font-weight:700;">id</div>
<svg class="a" style="left:0px;top:21.40px" width="17" height="18" viewBox="0 0 17 18">
<circle cx="12.3" cy="7.4" r="4.6" fill="#ecb25e"/>
<path d="M9.2 8.4L2.4 15.2Q2.2 16.4 3.4 16.6L4.6 15.6L5.6 16.4L6.8 15.2L6 14.2L11.6 10.4Z" fill="#ecb25e"/>
<circle cx="13.3" cy="5.9" r="1.15" fill="#fff" opacity="0.75"/></svg>
<div class="a" style="left:0;top:40.05px;width:314px;height:19.15px;background:#e0e0e0"></div>
<div class="t" style="left:21.80px;top:43.34px;font-size:11px;color:#151515;font-weight:700;">project_id</div>
<div class="t" style="left:216.50px;top:43.34px;font-size:11px;color:#151515;font-weight:700;">id</div>
<svg class="a" style="left:0px;top:40.25px" width="17" height="18" viewBox="0 0 17 18">
<circle cx="12.3" cy="7.4" r="4.6" fill="#ecb25e"/>
<path d="M9.2 8.4L2.4 15.2Q2.2 16.4 3.4 16.6L4.6 15.6L5.6 16.4L6.8 15.2L6 14.2L11.6 10.4Z" fill="#ecb25e"/>
<circle cx="13.3" cy="5.9" r="1.15" fill="#fff" opacity="0.75"/></svg>
<div class="a" style="left:0;top:58.90px;width:314px;height:19.15px;background:#e0e0e0"></div>
<div class="t" style="left:21.80px;top:62.19px;font-size:11px;color:#151515;font-weight:400;">project_name</div>
<div class="t" style="left:216.50px;top:62.19px;font-size:11px;color:#151515;font-weight:400;">name</div>
<div class="a" style="left:0;top:77.75px;width:314px;height:19.15px;background:#f3f3f3"></div>
<div class="a" style="left:0;top:95.80px;width:314px;height:0.8px;background:#ececec"></div>
<div class="a" style="left:19px;top:77.75px;width:1px;height:18.85px;background:#eaeaea"></div>
<div class="a" style="left:213.0px;top:77.75px;width:1px;height:18.85px;background:#eaeaea"></div>
<div class="t" style="left:21.80px;top:81.04px;font-size:11px;color:#151515;font-weight:400;">hours_budgeted</div>
<div class="t" style="left:216.50px;top:81.04px;font-size:11px;color:#151515;font-weight:400;">number_of_hours</div>
<div class="a" style="left:0;top:96.60px;width:314px;height:19.15px;background:#f3f3f3"></div>
<div class="a" style="left:0;top:114.65px;width:314px;height:0.8px;background:#ececec"></div>
<div class="a" style="left:19px;top:96.60px;width:1px;height:18.85px;background:#eaeaea"></div>
<div class="a" style="left:213.0px;top:96.60px;width:1px;height:18.85px;background:#eaeaea"></div>
<div class="t" style="left:21.80px;top:99.89px;font-size:11px;color:#151515;font-weight:400;">hours_booked</div>
<div class="t" style="left:216.50px;top:99.89px;font-size:11px;color:#151515;font-weight:400;">number_of_hours</div>
<div class="a" style="left:0;top:0;width:314px;height:105.50px;border:2px solid #7aa1cf;"></div>
<div class="a" style="left:0;top:0;width:314px;height:21.2px;background:#58aa86"></div>
<div class="t" style="left:79.67px;top:5.39px;font-size:11px;color:#fff;font-weight:700;">customer_project_dashboard</div>
</div>
<div class="a" style="left:1192px;top:596px;width:314px;height:105.00px;overflow:hidden;background:#e0e0e0;">
<div class="a" style="left:0;top:21.20px;width:314px;height:19.15px;background:#e0e0e0"></div>
<div class="t" style="left:21.80px;top:24.49px;font-size:11px;color:#151515;font-weight:700;">meeting_id (1,1)</div>
<div class="t" style="left:220.20px;top:24.49px;font-size:11px;color:#151515;font-weight:700;">id</div>
<svg class="a" style="left:0px;top:21.40px" width="17" height="18" viewBox="0 0 17 18">
<circle cx="12.3" cy="7.4" r="4.6" fill="#ecb25e"/>
<path d="M9.2 8.4L2.4 15.2Q2.2 16.4 3.4 16.6L4.6 15.6L5.6 16.4L6.8 15.2L6 14.2L11.6 10.4Z" fill="#ecb25e"/>
<circle cx="13.3" cy="5.9" r="1.15" fill="#fff" opacity="0.75"/></svg>
<div class="a" style="left:0;top:40.05px;width:314px;height:19.15px;background:#e0e0e0"></div>
<div class="t" style="left:21.80px;top:43.34px;font-size:11px;color:#151515;font-weight:400;">employee_id</div>
<div class="t" style="left:220.20px;top:43.34px;font-size:11px;color:#151515;font-weight:400;">id</div>
<div class="a" style="left:0;top:58.90px;width:314px;height:19.15px;background:#f3f3f3"></div>
<div class="a" style="left:0;top:76.95px;width:314px;height:0.8px;background:#ececec"></div>
<div class="a" style="left:19px;top:58.90px;width:1px;height:18.85px;background:#eaeaea"></div>
<div class="a" style="left:216.7px;top:58.90px;width:1px;height:18.85px;background:#eaeaea"></div>
<div class="t" style="left:21.80px;top:62.19px;font-size:11px;color:#151515;font-weight:400;">customer_id</div>
<div class="t" style="left:220.20px;top:62.19px;font-size:11px;color:#151515;font-weight:400;">id</div>
<div class="a" style="left:0;top:77.75px;width:314px;height:19.15px;background:#f3f3f3"></div>
<div class="a" style="left:0;top:95.80px;width:314px;height:0.8px;background:#ececec"></div>
<div class="a" style="left:19px;top:77.75px;width:1px;height:18.85px;background:#eaeaea"></div>
<div class="a" style="left:216.7px;top:77.75px;width:1px;height:18.85px;background:#eaeaea"></div>
<div class="t" style="left:21.80px;top:81.04px;font-size:11px;color:#151515;font-weight:400;">contact_person_id</div>
<div class="t" style="left:220.20px;top:81.04px;font-size:11px;color:#151515;font-weight:400;">id</div>
<div class="a" style="left:0;top:96.60px;width:314px;height:19.15px;background:#e0e0e0"></div>
<div class="t" style="left:21.80px;top:99.89px;font-size:11px;color:#151515;font-weight:400;">subject</div>
<div class="t" style="left:220.20px;top:99.89px;font-size:11px;color:#151515;font-weight:400;">subject</div>
<div class="a" style="left:0;top:0;width:314px;height:105.00px;border:2px solid #7aa1cf;"></div>
<div class="a" style="left:0;top:0;width:314px;height:21.2px;background:#3d76b1"></div>
<div class="t" style="left:135.91px;top:5.39px;font-size:11px;color:#fff;font-weight:700;">meeting</div>
</div>
<div class="a" style="left:1192px;top:714.5px;width:314px;height:100.00px;overflow:hidden;background:#e0e0e0;">
<div class="a" style="left:0;top:21.20px;width:314px;height:19.15px;background:#e0e0e0"></div>
<div class="t" style="left:21.80px;top:24.49px;font-size:11px;color:#151515;font-weight:700;">sales_invoice_id (1,1)</div>
<div class="t" style="left:164.70px;top:24.49px;font-size:11px;color:#151515;font-weight:700;">id</div>
<svg class="a" style="left:0px;top:21.40px" width="17" height="18" viewBox="0 0 17 18">
<circle cx="12.3" cy="7.4" r="4.6" fill="#ecb25e"/>
<path d="M9.2 8.4L2.4 15.2Q2.2 16.4 3.4 16.6L4.6 15.6L5.6 16.4L6.8 15.2L6 14.2L11.6 10.4Z" fill="#ecb25e"/>
<circle cx="13.3" cy="5.9" r="1.15" fill="#fff" opacity="0.75"/></svg>
<div class="a" style="left:0;top:40.05px;width:314px;height:19.15px;background:#e0e0e0"></div>
<div class="t" style="left:21.80px;top:43.34px;font-size:11px;color:#151515;font-weight:400;">customer_id</div>
<div class="t" style="left:164.70px;top:43.34px;font-size:11px;color:#151515;font-weight:400;">id</div>
<div class="a" style="left:0;top:58.90px;width:314px;height:19.15px;background:#e0e0e0"></div>
<div class="t" style="left:21.80px;top:62.19px;font-size:11px;color:#151515;font-weight:400;">invoice_date</div>
<div class="t" style="left:164.70px;top:62.19px;font-size:11px;color:#151515;font-weight:400;">date_only</div>
<div class="a" style="left:0;top:77.75px;width:314px;height:19.15px;background:#e0e0e0"></div>
<div class="t" style="left:21.80px;top:81.04px;font-size:11px;color:#151515;font-weight:400;">due_date</div>
<div class="t" style="left:164.70px;top:81.04px;font-size:11px;color:#151515;font-weight:400;">date_only</div>
<div class="a" style="left:0;top:96.60px;width:314px;height:19.15px;background:#e0e0e0"></div>
<div class="t" style="left:21.80px;top:99.89px;font-size:11px;color:#151515;font-weight:400;">notes</div>
<div class="t" style="left:164.70px;top:99.89px;font-size:11px;color:#151515;font-weight:400;">description</div>
<div class="a" style="left:0;top:0;width:314px;height:100.00px;border:2px solid #7aa1cf;"></div>
<div class="a" style="left:0;top:0;width:314px;height:21.2px;background:#3d76b1"></div>
<div class="t" style="left:121.23px;top:5.39px;font-size:11px;color:#fff;font-weight:700;">sales_invoice</div>
</div>
<svg class="a" style="left:0;top:0" width="1600" height="1100" viewBox="0 0 1600 1100">
<g fill="none" stroke-width="1.6">
<path d="M640 446.7H685.5V444.2H730" stroke="#333"/>
<path d="M730 437.4L712.2 444.2L730 451.3" stroke="#333" stroke-width="1.3"/>
<path d="M1010.5 312.5H1073.5V222.8H1192M1073.5 312.5V663.6H1192" stroke="#5a5a5a"/>
<path d="M1192 215.8L1175 222.8L1192 229.8M1192 656.6L1175 663.6L1192 670.6" stroke="#333" stroke-width="1.3"/>
<path d="M1073.5 312.5V663.6" stroke="#1a1a1a" stroke-width="1.45" stroke-dasharray="10 5"/>
<path d="M1073.5 668V830" stroke="#6a6a6a" stroke-width="1.45" stroke-dasharray="10 5"/>
<path d="M1073.5 380H1192M1073.5 491.3H1192" stroke="#1a1a1a" stroke-width="1.45" stroke-dasharray="10 5" stroke-dashoffset="-1"/>
<path d="M1192 373L1175 380L1192 387M1192 484.3L1175 491.3L1192 498.3" stroke="#333" stroke-width="1.3"/>
</g></svg>
</div></div>
<div class="a" style="left:75px;top:572px;width:239px;height:197px;overflow:hidden;background:#fff">
<div class="a" style="left:-80.27px;top:-30.52px;width:1600px;height:1100px;transform:scale(0.199);transform-origin:0 0">
<div class="a" style="left:446px;top:416px;width:194.5px;height:92.00px;overflow:hidden;background:#e0e0e0;border-radius:12px;">
<div class="a" style="left:0;top:29.00px;width:194.5px;height:19.15px;background:#e0e0e0"></div>
<div class="a" style="left:21.8px;top:34.8px;width:81.9px;height:6.5px;background:#555"></div>
<div class="a" style="left:129.7px;top:34.8px;width:9.8px;height:6.5px;background:#555"></div>
<svg class="a" style="left:0px;top:29.20px" width="17" height="18" viewBox="0 0 17 18">
<circle cx="12.3" cy="7.4" r="4.6" fill="#ecb25e"/>
<path d="M9.2 8.4L2.4 15.2Q2.2 16.4 3.4 16.6L4.6 15.6L5.6 16.4L6.8 15.2L6 14.2L11.6 10.4Z" fill="#ecb25e"/>
<circle cx="13.3" cy="5.9" r="1.15" fill="#fff" opacity="0.75"/></svg>
<div class="a" style="left:0;top:47.85px;width:194.5px;height:19.15px;background:#e0e0e0"></div>
<div class="a" style="left:21.8px;top:53.6px;width:27.5px;height:6.5px;background:#555"></div>
<div class="a" style="left:129.7px;top:53.6px;width:27.5px;height:6.5px;background:#555"></div>
<div class="a" style="left:0;top:66.70px;width:194.5px;height:19.15px;background:#e0e0e0"></div>
<div class="a" style="left:21.8px;top:72.5px;width:58.7px;height:6.5px;background:#555"></div>
<div class="a" style="left:129.7px;top:72.5px;width:35.5px;height:6.5px;background:#555"></div>
<div class="a" style="left:0;top:85.55px;width:194.5px;height:19.15px;background:#f3f3f3"></div>
<div class="a" style="left:21.8px;top:91.3px;width:53.2px;height:6.5px;background:#555"></div>
<div class="a" style="left:129.7px;top:91.3px;width:53.2px;height:6.5px;background:#555"></div>
<div class="a" style="left:0;top:0;width:194.5px;height:92.00px;border:7px solid #7aa1cf;border-radius:12px;border-color:#5b8cc6;"></div>
<div class="a" style="left:0;top:0;width:194.5px;height:29px;background:#3d76b1"></div>
<div class="a" style="left:77.1px;top:7px;width:40.3px;height:7px;background:#dfe8f2"></div>
</div>
<div class="a" style="left:729.5px;top:282px;width:281.5px;height:407.00px;overflow:hidden;background:#e0e0e0;border-radius:12px;">
<div class="a" style="left:0;top:29.00px;width:281.5px;height:19.15px;background:#e0e0e0"></div>
<div class="a" style="left:21.8px;top:35.0px;width:91.1px;height:6.5px;background:#555"></div>
<div class="a" style="left:194px;top:35.0px;width:9.8px;height:6.5px;background:#555"></div>
<svg class="a" style="left:0px;top:29.20px" width="17" height="18" viewBox="0 0 17 18">
<circle cx="12.3" cy="7.4" r="4.6" fill="#ecb25e"/>
<path d="M9.2 8.4L2.4 15.2Q2.2 16.4 3.4 16.6L4.6 15.6L5.6 16.4L6.8 15.2L6 14.2L11.6 10.4Z" fill="#ecb25e"/>
<circle cx="13.3" cy="5.9" r="1.15" fill="#fff" opacity="0.75"/></svg>
<div class="a" style="left:0;top:47.85px;width:281.5px;height:19.15px;background:#e0e0e0"></div>
<div class="a" style="left:21.8px;top:53.9px;width:27.5px;height:6.5px;background:#555"></div>
<div class="a" style="left:194px;top:53.9px;width:27.5px;height:6.5px;background:#555"></div>
<div class="a" style="left:0;top:66.70px;width:281.5px;height:19.15px;background:#f3f3f3"></div>
<div class="a" style="left:21.8px;top:72.7px;width:20.8px;height:6.5px;background:#555"></div>
<div class="a" style="left:194px;top:72.7px;width:20.8px;height:6.5px;background:#555"></div>
<div class="a" style="left:0;top:85.55px;width:281.5px;height:19.15px;background:#f3f3f3"></div>
<div class="a" style="left:21.8px;top:91.6px;width:27.5px;height:6.5px;background:#555"></div>
<div class="a" style="left:194px;top:91.6px;width:39.1px;height:6.5px;background:#555"></div>
<div class="a" style="left:0;top:104.40px;width:281.5px;height:19.15px;background:#f3f3f3"></div>
<div class="a" style="left:21.8px;top:110.4px;width:70.9px;height:6.5px;background:#555"></div>
<div class="a" style="left:194px;top:110.4px;width:70.9px;height:6.5px;background:#555"></div>
<div class="a" style="left:0;top:123.25px;width:281.5px;height:19.15px;background:#f3f3f3"></div>
<div class="a" style="left:21.8px;top:129.2px;width:44.0px;height:6.5px;background:#555"></div>
<div class="a" style="left:194px;top:129.2px;width:44.0px;height:6.5px;background:#555"></div>
<div class="a" style="left:0;top:142.10px;width:281.5px;height:19.15px;background:#f3f3f3"></div>
<div class="a" style="left:21.8px;top:148.1px;width:16.5px;height:6.5px;background:#555"></div>
<div class="a" style="left:194px;top:148.1px;width:27.5px;height:6.5px;background:#555"></div>
<div class="a" style="left:0;top:160.95px;width:281.5px;height:19.15px;background:#f3f3f3"></div>
<div class="a" style="left:21.8px;top:167.0px;width:50.8px;height:6.5px;background:#555"></div>
<div class="a" style="left:194px;top:167.0px;width:8.6px;height:6.5px;background:#555"></div>
<div class="a" style="left:0;top:179.80px;width:281.5px;height:19.15px;background:#f3f3f3"></div>
<div class="a" style="left:21.8px;top:185.8px;width:26.3px;height:6.5px;background:#555"></div>
<div class="a" style="left:194px;top:185.8px;width:26.3px;height:6.5px;background:#555"></div>
<div class="a" style="left:0;top:198.65px;width:281.5px;height:19.15px;background:#f3f3f3"></div>
<div class="a" style="left:21.8px;top:204.7px;width:37.3px;height:6.5px;background:#555"></div>
<div class="a" style="left:194px;top:204.7px;width:37.3px;height:6.5px;background:#555"></div>
<div class="a" style="left:0;top:217.50px;width:281.5px;height:19.15px;background:#f3f3f3"></div>
<div class="a" style="left:21.8px;top:223.5px;width:42.2px;height:6.5px;background:#555"></div>
<div class="a" style="left:194px;top:223.5px;width:37.3px;height:6.5px;background:#555"></div>
<div class="a" style="left:0;top:236.35px;width:281.5px;height:19.15px;background:#f3f3f3"></div>
<div class="a" style="left:21.8px;top:242.4px;width:55.0px;height:6.5px;background:#555"></div>
<div class="a" style="left:194px;top:242.4px;width:8.6px;height:6.5px;background:#555"></div>
<div class="a" style="left:0;top:255.20px;width:281.5px;height:19.15px;background:#f3f3f3"></div>
<div class="a" style="left:21.8px;top:261.2px;width:39.1px;height:6.5px;background:#555"></div>
<div class="a" style="left:194px;top:261.2px;width:39.1px;height:6.5px;background:#555"></div>
<svg class="a" style="left:1.2px;top:257.00px" width="16" height="15" viewBox="0 0 16 15">
<rect x="0" y="0" width="7.2" height="6.8" fill="#3f78bf"/><rect x="8.2" y="0" width="7.2" height="6.8" fill="#3f78bf"/>
<rect x="0" y="7.8" width="7.2" height="6.8" fill="#3f78bf"/><rect x="8.2" y="7.8" width="7.2" height="6.8" fill="#3f78bf"/>
<path d="M2 3.4H5.2M3.6 1.8V5M10 3.4H13.6M2 11.2H5.2M10 11.2H13.6" stroke="#c8dcf2" stroke-width="1.1"/></svg>
<div class="a" style="left:0;top:274.05px;width:281.5px;height:19.15px;background:#f3f3f3"></div>
<div class="a" style="left:21.8px;top:280.1px;width:56.9px;height:6.5px;background:#555"></div>
<div class="a" style="left:194px;top:280.1px;width:56.9px;height:6.5px;background:#555"></div>
<div class="a" style="left:0;top:292.90px;width:281.5px;height:19.15px;background:#e0e0e0"></div>
<div class="a" style="left:21.8px;top:298.9px;width:20.8px;height:6.5px;background:#555"></div>
<div class="a" style="left:194px;top:298.9px;width:61.1px;height:6.5px;background:#555"></div>
<div class="a" style="left:0;top:311.75px;width:281.5px;height:19.15px;background:#f3f3f3"></div>
<div class="a" style="left:21.8px;top:317.8px;width:23.8px;height:6.5px;background:#555"></div>
<div class="a" style="left:194px;top:317.8px;width:23.8px;height:6.5px;background:#555"></div>
<div class="a" style="left:0;top:330.60px;width:281.5px;height:19.15px;background:#f3f3f3"></div>
<div class="a" style="left:21.8px;top:336.6px;width:54.4px;height:6.5px;background:#555"></div>
<div class="a" style="left:194px;top:336.6px;width:27.5px;height:6.5px;background:#555"></div>
<div class="a" style="left:0;top:349.45px;width:281.5px;height:19.15px;background:#f3f3f3"></div>
<div class="a" style="left:21.8px;top:355.5px;width:81.3px;height:6.5px;background:#555"></div>
<div class="a" style="left:194px;top:355.5px;width:48.3px;height:6.5px;background:#555"></div>
<div class="a" style="left:0;top:368.30px;width:281.5px;height:19.15px;background:#f3f3f3"></div>
<div class="a" style="left:21.8px;top:374.3px;width:61.2px;height:6.5px;background:#555"></div>
<div class="a" style="left:194px;top:374.3px;width:27.5px;height:6.5px;background:#555"></div>
<div class="a" style="left:0;top:387.15px;width:281.5px;height:19.15px;background:#f3f3f3"></div>
<div class="a" style="left:21.8px;top:393.2px;width:88.1px;height:6.5px;background:#555"></div>
<div class="a" style="left:194px;top:393.2px;width:48.3px;height:6.5px;background:#555"></div>
<div class="a" style="left:0;top:0;width:281.5px;height:407.00px;border:7px solid #7aa1cf;border-radius:12px;border-color:#5b8cc6;"></div>
<div class="a" style="left:0;top:0;width:281.5px;height:29px;background:#3d76b1"></div>
<div class="a" style="left:116.0px;top:7px;width:49.5px;height:7px;background:#dfe8f2"></div>
</div>
<div class="a" style="left:1192px;top:192px;width:314px;height:108.50px;overflow:hidden;background:#e0e0e0;border-radius:12px;">
<div class="a" style="left:0;top:29.00px;width:314px;height:19.15px;background:#e0e0e0"></div>
<div class="a" style="left:21.8px;top:34.6px;width:65.4px;height:6.5px;background:#555"></div>
<div class="a" style="left:252.8px;top:34.6px;width:9.8px;height:6.5px;background:#555"></div>
<svg class="a" style="left:0px;top:29.20px" width="17" height="18" viewBox="0 0 17 18">
<circle cx="12.3" cy="7.4" r="4.6" fill="#ecb25e"/>
<path d="M9.2 8.4L2.4 15.2Q2.2 16.4 3.4 16.6L4.6 15.6L5.6 16.4L6.8 15.2L6 14.2L11.6 10.4Z" fill="#ecb25e"/>
<circle cx="13.3" cy="5.9" r="1.15" fill="#fff" opacity="0.75"/></svg>
<div class="a" style="left:0;top:47.85px;width:314px;height:19.15px;background:#e0e0e0"></div>
<div class="a" style="left:21.8px;top:53.5px;width:123.5px;height:6.5px;background:#555"></div>
<div class="a" style="left:252.8px;top:53.5px;width:9.8px;height:6.5px;background:#555"></div>
<svg class="a" style="left:0px;top:48.05px" width="17" height="18" viewBox="0 0 17 18">
<circle cx="12.3" cy="7.4" r="4.6" fill="#ecb25e"/>
<path d="M9.2 8.4L2.4 15.2Q2.2 16.4 3.4 16.6L4.6 15.6L5.6 16.4L6.8 15.2L6 14.2L11.6 10.4Z" fill="#ecb25e"/>
<circle cx="13.3" cy="5.9" r="1.15" fill="#fff" opacity="0.75"/></svg>
<div class="a" style="left:0;top:66.70px;width:314px;height:19.15px;background:#f3f3f3"></div>
<div class="a" style="left:21.8px;top:72.3px;width:160.2px;height:6.5px;background:#555"></div>
<div class="a" style="left:252.8px;top:72.3px;width:27.5px;height:6.5px;background:#555"></div>
<svg class="a" style="left:1.2px;top:68.50px" width="16" height="15" viewBox="0 0 16 15">
<rect x="0" y="0" width="7.2" height="6.8" fill="#3f78bf"/><rect x="8.2" y="0" width="7.2" height="6.8" fill="#3f78bf"/>
<rect x="0" y="7.8" width="7.2" height="6.8" fill="#3f78bf"/><rect x="8.2" y="7.8" width="7.2" height="6.8" fill="#3f78bf"/>
<path d="M2 3.4H5.2M3.6 1.8V5M10 3.4H13.6M2 11.2H5.2M10 11.2H13.6" stroke="#c8dcf2" stroke-width="1.1"/></svg>
<div class="a" style="left:0;top:85.55px;width:314px;height:19.15px;background:#e0e0e0"></div>
<div class="a" style="left:21.8px;top:91.2px;width:51.3px;height:6.5px;background:#555"></div>
<div class="a" style="left:252.8px;top:91.2px;width:27.5px;height:6.5px;background:#555"></div>
<div class="a" style="left:0;top:0;width:314px;height:108.50px;border:7px solid #7aa1cf;border-radius:12px;border-color:#5b8cc6;"></div>
<div class="a" style="left:0;top:0;width:314px;height:29px;background:#3d76b1"></div>
<div class="a" style="left:88.2px;top:7px;width:137.5px;height:7px;background:#dfe8f2"></div>
</div>
<div class="a" style="left:1192px;top:312px;width:314px;height:122.60px;overflow:hidden;background:#e0e0e0;border-radius:12px;">
<div class="a" style="left:0;top:29.00px;width:314px;height:19.15px;background:#e0e0e0"></div>
<div class="a" style="left:21.8px;top:34.6px;width:35.5px;height:6.5px;background:#555"></div>
<div class="a" style="left:216.5px;top:34.6px;width:9.8px;height:6.5px;background:#555"></div>
<svg class="a" style="left:0px;top:29.20px" width="17" height="18" viewBox="0 0 17 18">
<circle cx="12.3" cy="7.4" r="4.6" fill="#ecb25e"/>
<path d="M9.2 8.4L2.4 15.2Q2.2 16.4 3.4 16.6L4.6 15.6L5.6 16.4L6.8 15.2L6 14.2L11.6 10.4Z" fill="#ecb25e"/>
<circle cx="13.3" cy="5.9" r="1.15" fill="#fff" opacity="0.75"/></svg>
<div class="a" style="left:0;top:47.85px;width:314px;height:19.15px;background:#f3f3f3"></div>
<div class="a" style="left:21.8px;top:53.5px;width:47.7px;height:6.5px;background:#555"></div>
<div class="a" style="left:216.5px;top:53.5px;width:8.6px;height:6.5px;background:#555"></div>
<div class="a" style="left:0;top:66.70px;width:314px;height:19.15px;background:#f3f3f3"></div>
<div class="a" style="left:21.8px;top:72.3px;width:59.9px;height:6.5px;background:#555"></div>
<div class="a" style="left:216.5px;top:72.3px;width:8.6px;height:6.5px;background:#555"></div>
<div class="a" style="left:0;top:85.55px;width:314px;height:19.15px;background:#e0e0e0"></div>
<div class="a" style="left:21.8px;top:91.2px;width:66.6px;height:6.5px;background:#555"></div>
<div class="a" style="left:216.5px;top:91.2px;width:27.5px;height:6.5px;background:#555"></div>
<div class="a" style="left:0;top:104.40px;width:314px;height:19.15px;background:#e0e0e0"></div>
<div class="a" style="left:21.8px;top:110.0px;width:78.9px;height:6.5px;background:#555"></div>
<div class="a" style="left:216.5px;top:110.0px;width:27.5px;height:6.5px;background:#555"></div>
<div class="a" style="left:0;top:0;width:314px;height:122.60px;border:7px solid #7aa1cf;border-radius:12px;border-color:#5b8cc6;"></div>
<div class="a" style="left:0;top:0;width:314px;height:29px;background:#58aa86"></div>
<div class="a" style="left:120.0px;top:7px;width:74.0px;height:7px;background:#dfe8f2"></div>
</div>
<div class="a" style="left:1192px;top:461px;width:314px;height:111.00px;overflow:hidden;background:#e0e0e0;border-radius:12px;">
<div class="a" style="left:0;top:29.00px;width:314px;height:19.15px;background:#e0e0e0"></div>
<div class="a" style="left:21.8px;top:34.6px;width:65.4px;height:6.5px;background:#555"></div>
<div class="a" style="left:216.5px;top:34.6px;width:9.8px;height:6.5px;background:#555"></div>
<svg class="a" style="left:0px;top:29.20px" width="17" height="18" viewBox="0 0 17 18">
<circle cx="12.3" cy="7.4" r="4.6" fill="#ecb25e"/>
<path d="M9.2 8.4L2.4 15.2Q2.2 16.4 3.4 16.6L4.6 15.6L5.6 16.4L6.8 15.2L6 14.2L11.6 10.4Z" fill="#ecb25e"/>
<circle cx="13.3" cy="5.9" r="1.15" fill="#fff" opacity="0.75"/></svg>
<div class="a" style="left:0;top:47.85px;width:314px;height:19.15px;background:#e0e0e0"></div>
<div class="a" style="left:21.8px;top:53.5px;width:52.6px;height:6.5px;background:#555"></div>
<div class="a" style="left:216.5px;top:53.5px;width:9.8px;height:6.5px;background:#555"></div>
<svg class="a" style="left:0px;top:48.05px" width="17" height="18" viewBox="0 0 17 18">
<circle cx="12.3" cy="7.4" r="4.6" fill="#ecb25e"/>
<path d="M9.2 8.4L2.4 15.2Q2.2 16.4 3.4 16.6L4.6 15.6L5.6 16.4L6.8 15.2L6 14.2L11.6 10.4Z" fill="#ecb25e"/>
<circle cx="13.3" cy="5.9" r="1.15" fill="#fff" opacity="0.75"/></svg>
<div class="a" style="left:0;top:66.70px;width:314px;height:19.15px;background:#e0e0e0"></div>
<div class="a" style="left:21.8px;top:72.3px;width:66.6px;height:6.5px;background:#555"></div>
<div class="a" style="left:216.5px;top:72.3px;width:27.5px;height:6.5px;background:#555"></div>
<div class="a" style="left:0;top:85.55px;width:314px;height:19.15px;background:#f3f3f3"></div>
<div class="a" style="left:21.8px;top:91.2px;width:79.5px;height:6.5px;background:#555"></div>
<div class="a" style="left:216.5px;top:91.2px;width:86.2px;height:6.5px;background:#555"></div>
<div class="a" style="left:0;top:104.40px;width:314px;height:19.15px;background:#f3f3f3"></div>
<div class="a" style="left:21.8px;top:110.0px;width:69.7px;height:6.5px;background:#555"></div>
<div class="a" style="left:216.5px;top:110.0px;width:86.2px;height:6.5px;background:#555"></div>
<div class="a" style="left:0;top:0;width:314px;height:111.00px;border:7px solid #7aa1cf;border-radius:12px;border-color:#5b8cc6;"></div>
<div class="a" style="left:0;top:0;width:314px;height:29px;background:#58aa86"></div>
<div class="a" style="left:79.7px;top:7px;width:154.7px;height:7px;background:#dfe8f2"></div>
</div>
<div class="a" style="left:1192px;top:596px;width:314px;height:108.50px;overflow:hidden;background:#e0e0e0;border-radius:12px;">
<div class="a" style="left:0;top:29.00px;width:314px;height:19.15px;background:#e0e0e0"></div>
<div class="a" style="left:21.8px;top:34.6px;width:83.7px;height:6.5px;background:#555"></div>
<div class="a" style="left:220.2px;top:34.6px;width:9.8px;height:6.5px;background:#555"></div>
<svg class="a" style="left:0px;top:29.20px" width="17" height="18" viewBox="0 0 17 18">
<circle cx="12.3" cy="7.4" r="4.6" fill="#ecb25e"/>
<path d="M9.2 8.4L2.4 15.2Q2.2 16.4 3.4 16.6L4.6 15.6L5.6 16.4L6.8 15.2L6 14.2L11.6 10.4Z" fill="#ecb25e"/>
<circle cx="13.3" cy="5.9" r="1.15" fill="#fff" opacity="0.75"/></svg>
<div class="a" style="left:0;top:47.85px;width:314px;height:19.15px;background:#e0e0e0"></div>
<div class="a" style="left:21.8px;top:53.5px;width:62.4px;height:6.5px;background:#555"></div>
<div class="a" style="left:220.2px;top:53.5px;width:8.6px;height:6.5px;background:#555"></div>
<div class="a" style="left:0;top:66.70px;width:314px;height:19.15px;background:#f3f3f3"></div>
<div class="a" style="left:21.8px;top:72.3px;width:59.9px;height:6.5px;background:#555"></div>
<div class="a" style="left:220.2px;top:72.3px;width:8.6px;height:6.5px;background:#555"></div>
<div class="a" style="left:0;top:85.55px;width:314px;height:19.15px;background:#f3f3f3"></div>
<div class="a" style="left:21.8px;top:91.2px;width:89.9px;height:6.5px;background:#555"></div>
<div class="a" style="left:220.2px;top:91.2px;width:8.6px;height:6.5px;background:#555"></div>
<div class="a" style="left:0;top:0;width:314px;height:108.50px;border:7px solid #7aa1cf;border-radius:12px;border-color:#5b8cc6;"></div>
<div class="a" style="left:0;top:0;width:314px;height:29px;background:#3d76b1"></div>
<div class="a" style="left:135.9px;top:7px;width:42.2px;height:7px;background:#dfe8f2"></div>
</div>
<div class="a" style="left:1192px;top:714.5px;width:314px;height:122.00px;overflow:hidden;background:#e0e0e0;border-radius:12px;">
<div class="a" style="left:0;top:29.00px;width:314px;height:19.15px;background:#e0e0e0"></div>
<div class="a" style="left:21.8px;top:34.6px;width:113.1px;height:6.5px;background:#555"></div>
<div class="a" style="left:164.7px;top:34.6px;width:9.8px;height:6.5px;background:#555"></div>
<svg class="a" style="left:0px;top:29.20px" width="17" height="18" viewBox="0 0 17 18">
<circle cx="12.3" cy="7.4" r="4.6" fill="#ecb25e"/>
<path d="M9.2 8.4L2.4 15.2Q2.2 16.4 3.4 16.6L4.6 15.6L5.6 16.4L6.8 15.2L6 14.2L11.6 10.4Z" fill="#ecb25e"/>
<circle cx="13.3" cy="5.9" r="1.15" fill="#fff" opacity="0.75"/></svg>
<div class="a" style="left:0;top:47.85px;width:314px;height:19.15px;background:#e0e0e0"></div>
<div class="a" style="left:21.8px;top:53.5px;width:59.9px;height:6.5px;background:#555"></div>
<div class="a" style="left:164.7px;top:53.5px;width:8.6px;height:6.5px;background:#555"></div>
<div class="a" style="left:0;top:66.70px;width:314px;height:19.15px;background:#e0e0e0"></div>
<div class="a" style="left:21.8px;top:72.3px;width:61.8px;height:6.5px;background:#555"></div>
<div class="a" style="left:164.7px;top:72.3px;width:47.7px;height:6.5px;background:#555"></div>
<div class="a" style="left:0;top:85.55px;width:314px;height:19.15px;background:#e0e0e0"></div>
<div class="a" style="left:21.8px;top:91.2px;width:45.9px;height:6.5px;background:#555"></div>
<div class="a" style="left:164.7px;top:91.2px;width:47.7px;height:6.5px;background:#555"></div>
<div class="a" style="left:0;top:104.40px;width:314px;height:19.15px;background:#e0e0e0"></div>
<div class="a" style="left:21.8px;top:110.0px;width:26.9px;height:6.5px;background:#555"></div>
<div class="a" style="left:164.7px;top:110.0px;width:53.2px;height:6.5px;background:#555"></div>
<div class="a" style="left:0;top:0;width:314px;height:122.00px;border:7px solid #7aa1cf;border-radius:12px;border-color:#5b8cc6;"></div>
<div class="a" style="left:0;top:0;width:314px;height:29px;background:#3d76b1"></div>
<div class="a" style="left:121.2px;top:7px;width:71.5px;height:7px;background:#dfe8f2"></div>
</div>
<div class="a" style="left:1192px;top:852px;width:332px;height:120.60px;overflow:hidden;background:#e0e0e0;border-radius:12px;">
<div class="a" style="left:0;top:29.00px;width:332px;height:19.15px;background:#e0e0e0"></div>
<div class="a" style="left:21.8px;top:34.6px;width:104.5px;height:6.5px;background:#555"></div>
<div class="a" style="left:180px;top:34.6px;width:9.8px;height:6.5px;background:#555"></div>
<svg class="a" style="left:0px;top:29.20px" width="17" height="18" viewBox="0 0 17 18">
<circle cx="12.3" cy="7.4" r="4.6" fill="#ecb25e"/>
<path d="M9.2 8.4L2.4 15.2Q2.2 16.4 3.4 16.6L4.6 15.6L5.6 16.4L6.8 15.2L6 14.2L11.6 10.4Z" fill="#ecb25e"/>
<circle cx="13.3" cy="5.9" r="1.15" fill="#fff" opacity="0.75"/></svg>
<div class="a" style="left:0;top:47.85px;width:332px;height:19.15px;background:#e0e0e0"></div>
<div class="a" style="left:21.8px;top:53.5px;width:80.7px;height:6.5px;background:#555"></div>
<div class="a" style="left:180px;top:53.5px;width:8.6px;height:6.5px;background:#555"></div>
<div class="a" style="left:0;top:66.70px;width:332px;height:19.15px;background:#e0e0e0"></div>
<div class="a" style="left:21.8px;top:72.3px;width:53.2px;height:6.5px;background:#555"></div>
<div class="a" style="left:180px;top:72.3px;width:53.2px;height:6.5px;background:#555"></div>
<div class="a" style="left:0;top:85.55px;width:332px;height:19.15px;background:#e0e0e0"></div>
<div class="a" style="left:21.8px;top:91.2px;width:121.7px;height:6.5px;background:#555"></div>
<div class="a" style="left:180px;top:91.2px;width:8.6px;height:6.5px;background:#555"></div>
<div class="a" style="left:0;top:104.40px;width:332px;height:19.15px;background:#e0e0e0"></div>
<div class="a" style="left:21.8px;top:110.0px;width:36.7px;height:6.5px;background:#555"></div>
<div class="a" style="left:180px;top:110.0px;width:36.7px;height:6.5px;background:#555"></div>
<div class="a" style="left:0;top:0;width:332px;height:120.60px;border:7px solid #7aa1cf;border-radius:12px;border-color:#5b8cc6;"></div>
<div class="a" style="left:0;top:0;width:332px;height:29px;background:#3d76b1"></div>
<div class="a" style="left:134.5px;top:7px;width:63.0px;height:7px;background:#dfe8f2"></div>
</div>
<div class="a" style="left:1192px;top:982px;width:371px;height:111.60px;overflow:hidden;background:#e0e0e0;border-radius:12px;">
<div class="a" style="left:0;top:29.00px;width:371px;height:19.15px;background:#e0e0e0"></div>
<div class="a" style="left:21.8px;top:34.6px;width:78.2px;height:6.5px;background:#555"></div>
<div class="a" style="left:210px;top:34.6px;width:9.8px;height:6.5px;background:#555"></div>
<svg class="a" style="left:0px;top:29.20px" width="17" height="18" viewBox="0 0 17 18">
<circle cx="12.3" cy="7.4" r="4.6" fill="#ecb25e"/>
<path d="M9.2 8.4L2.4 15.2Q2.2 16.4 3.4 16.6L4.6 15.6L5.6 16.4L6.8 15.2L6 14.2L11.6 10.4Z" fill="#ecb25e"/>
<circle cx="13.3" cy="5.9" r="1.15" fill="#fff" opacity="0.75"/></svg>
<div class="a" style="left:0;top:47.85px;width:371px;height:19.15px;background:#e0e0e0"></div>
<div class="a" style="left:21.8px;top:53.5px;width:59.9px;height:6.5px;background:#555"></div>
<div class="a" style="left:210px;top:53.5px;width:8.6px;height:6.5px;background:#555"></div>
<div class="a" style="left:0;top:66.70px;width:371px;height:19.15px;background:#e0e0e0"></div>
<div class="a" style="left:21.8px;top:72.3px;width:66.6px;height:6.5px;background:#555"></div>
<div class="a" style="left:210px;top:72.3px;width:27.5px;height:6.5px;background:#555"></div>
<div class="a" style="left:0;top:85.55px;width:371px;height:19.15px;background:#e0e0e0"></div>
<div class="a" style="left:21.8px;top:91.2px;width:53.2px;height:6.5px;background:#555"></div>
<div class="a" style="left:210px;top:91.2px;width:53.2px;height:6.5px;background:#555"></div>
<div class="a" style="left:0;top:0;width:371px;height:111.60px;border:7px solid #7aa1cf;border-radius:12px;border-color:#5b8cc6;"></div>
<div class="a" style="left:0;top:0;width:371px;height:29px;background:#3d76b1"></div>
<div class="a" style="left:167.2px;top:7px;width:36.7px;height:7px;background:#dfe8f2"></div>
</div>
<svg class="a" style="left:0;top:0" width="1600" height="1100" viewBox="0 0 1600 1100">
<g fill="none" stroke="#111" stroke-width="7">
<path d="M640 446.7H685.5V435H730"/>
<path d="M1010.5 312.5H1073.5V222.8H1192M1073.5 312.5V663.6H1192"/>
<path d="M1073.5 312.5V1085H1192M1073.5 380H1192M1073.5 491.3H1192" stroke-dasharray="40 22"/>
</g>
<g fill="#111"><circle cx="1190" cy="222.8" r="9"/><circle cx="1190" cy="663.6" r="9"/><circle cx="1190" cy="380" r="9"/><circle cx="1190" cy="491.3" r="9"/><circle cx="1190" cy="1085" r="9"/><circle cx="728" cy="435" r="9"/></g>
</svg>
</div>
<div class="a" style="left:0;top:132px;width:239px;height:65px;background:rgba(0,0,0,0.14)"></div>
<div class="a" style="left:0;top:0;width:239px;height:132.5px;border:1.6px solid #111"></div>
</div>
</body></html>
